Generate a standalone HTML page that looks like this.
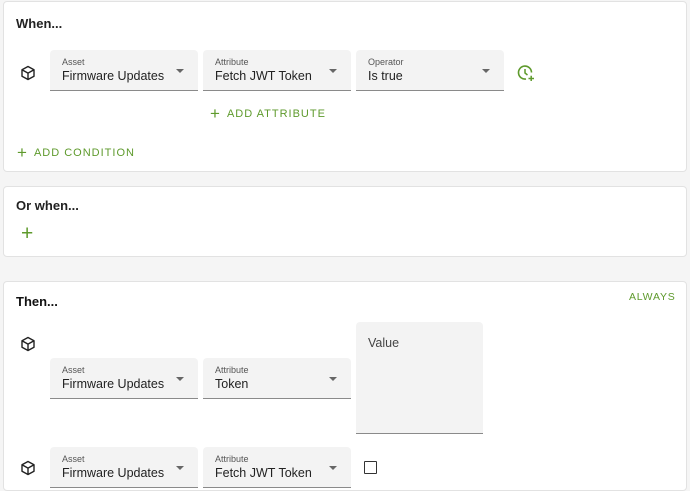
<!DOCTYPE html>
<html><head><style>
*{box-sizing:border-box;margin:0;padding:0}
body{width:690px;height:486px;overflow:hidden;background:#f5f5f5;font-family:"Liberation Sans",Arial,sans-serif;position:relative;color:#222}
.card{position:absolute;left:3px;width:684px;background:#fff;border:1px solid #e2e2e2;border-radius:4px}
.h{position:absolute;left:12px;font-size:13px;font-weight:bold;color:#222}
.f{position:absolute;width:148px;height:41px;background:#f3f3f3;border-bottom:1px solid #8a8a8a;border-radius:4px 4px 0 0}
.f .l{position:absolute;left:12px;top:7px;font-size:9px;color:#555}
.f .v{position:absolute;left:12px;top:19px;font-size:12.5px;color:#222}
.f .a{position:absolute;right:14px;top:19px;width:0;height:0;border-left:4.5px solid transparent;border-right:4.5px solid transparent;border-top:4.5px solid #666}
.g{position:absolute;color:#5e9a2c;font-size:11px;letter-spacing:1px}
.g span{font-size:17px;margin-right:6px;vertical-align:-2px}
.cube{position:absolute}
</style></head><body>
<svg width="0" height="0" style="position:absolute"><defs><g id="cb"><path d="M8 1.5 L14 4.8 L14 11.2 L8 14.5 L2 11.2 L2 4.8 Z M2 4.8 L8 8.1 L14 4.8 M8 8.1 L8 14.5" fill="none" stroke="#222" stroke-width="1.4" stroke-linejoin="round"/></g></defs></svg>

<div class="card" style="top:1px;height:171px">
<div class="h" style="top:14px">When...</div>
</div>
<svg class="cube" style="left:20px;top:65px" width="16" height="16"><use href="#cb"/></svg>
<div class="f" style="left:50px;top:50px"><div class="l">Asset</div><div class="v">Firmware Updates</div><div class="a"></div></div>
<div class="f" style="left:203px;top:50px"><div class="l">Attribute</div><div class="v">Fetch JWT Token</div><div class="a"></div></div>
<div class="f" style="left:356px;top:50px"><div class="l">Operator</div><div class="v">Is true</div><div class="a"></div></div>
<svg style="position:absolute;left:517px;top:64px" width="18" height="18"><path d="M14.5 8.5 A6.5 6.5 0 1 0 9 15" fill="none" stroke="#5e9a2c" stroke-width="1.6"/><path d="M8 5 V9 L10.5 11" fill="none" stroke="#5e9a2c" stroke-width="1.5"/><path d="M11.5 14.5 H17 M14.2 11.8 V17" stroke="#5e9a2c" stroke-width="1.5"/></svg>
<div class="g" style="left:210px;top:104px"><span>+</span>ADD ATTRIBUTE</div>
<div class="g" style="left:17px;top:143px"><span>+</span>ADD CONDITION</div>

<div class="card" style="top:186px;height:71px">
<div class="h" style="top:11px">Or when...</div>
</div>
<div class="g" style="left:21px;top:222px;font-size:21px">+</div>

<div class="card" style="top:281px;height:210px">
<div class="h" style="top:12px;color:#111">Then...</div>
</div>
<div class="g" style="left:629px;top:291px;font-size:10.5px;letter-spacing:.8px">ALWAYS</div>
<svg class="cube" style="left:20px;top:336px" width="16" height="16"><use href="#cb"/></svg>
<div class="f" style="left:50px;top:358px"><div class="l">Asset</div><div class="v">Firmware Updates</div><div class="a"></div></div>
<div class="f" style="left:203px;top:358px"><div class="l">Attribute</div><div class="v">Token</div><div class="a"></div></div>
<div class="f" style="left:356px;top:322px;width:127px;height:112px"><div class="v" style="top:14px;color:#444">Value</div></div>
<svg class="cube" style="left:20px;top:460px" width="16" height="16"><use href="#cb"/></svg>
<div class="f" style="left:50px;top:447px"><div class="l">Asset</div><div class="v">Firmware Updates</div><div class="a"></div></div>
<div class="f" style="left:203px;top:447px"><div class="l">Attribute</div><div class="v">Fetch JWT Token</div><div class="a"></div></div>
<div style="position:absolute;left:364px;top:461px;width:13px;height:13px;border:1.5px solid #333;border-radius:1px"></div>
</body></html>
